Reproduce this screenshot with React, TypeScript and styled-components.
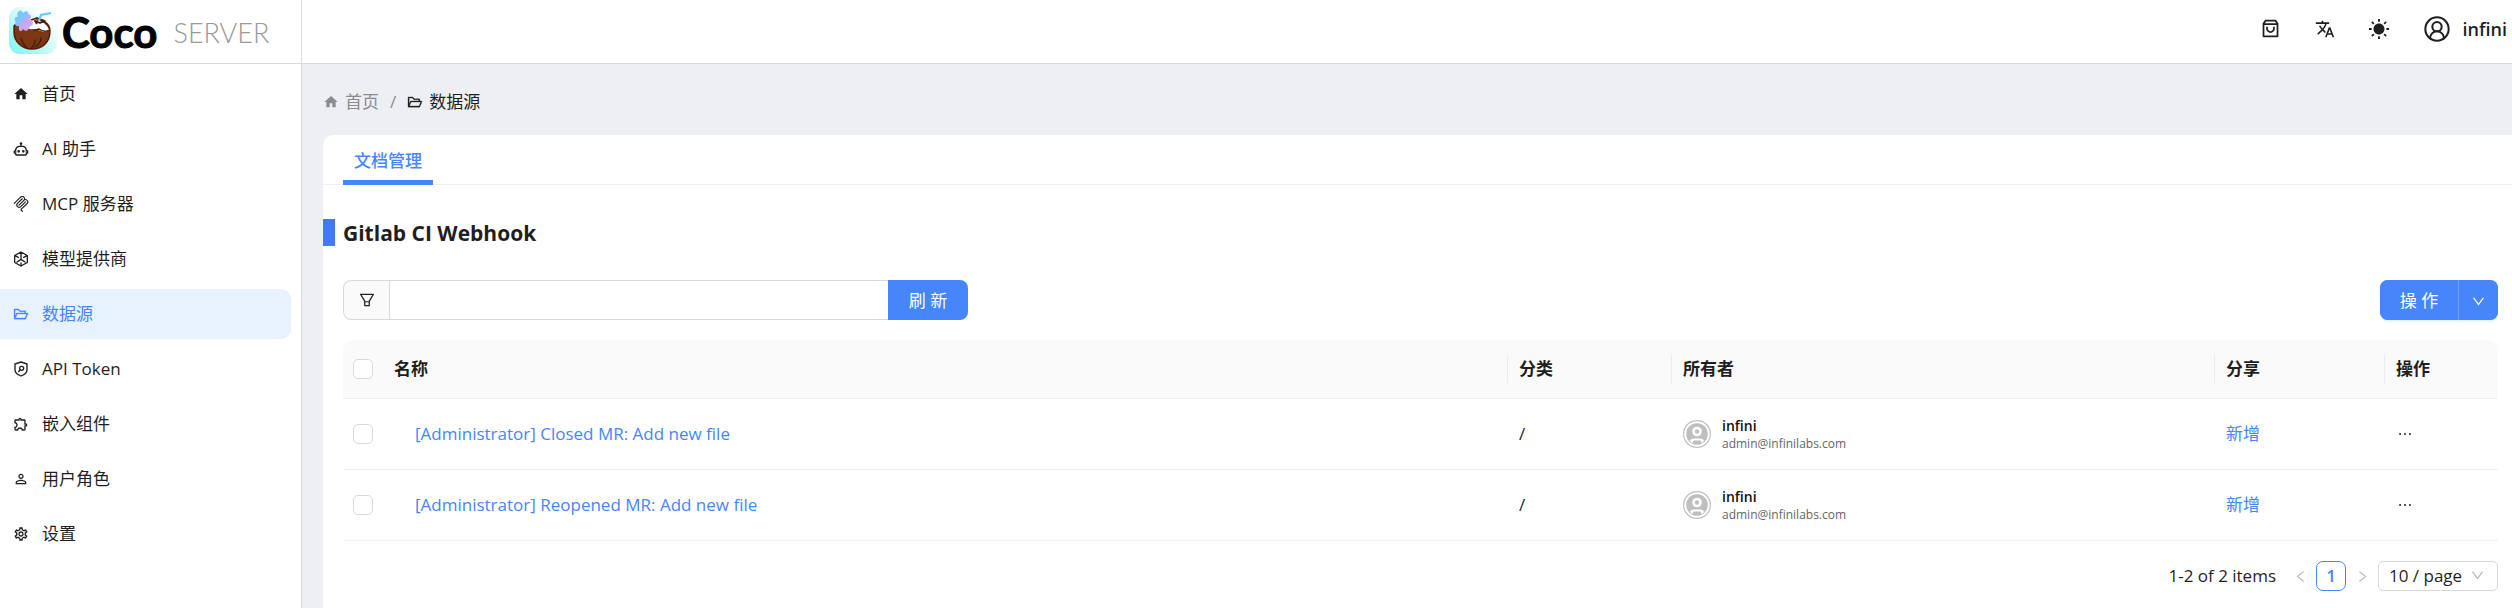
import React from 'react';
import styled, { createGlobalStyle } from 'styled-components';
import { MdHome, MdPersonOutline, MdTranslate, MdOutlineExtension, MdOutlineSettings } from 'react-icons/md';
import {
  AiOutlineFolderOpen,
  AiOutlineFilter,
  AiOutlineDown,
  AiOutlineLeft,
  AiOutlineRight,
  AiOutlineEllipsis,
} from 'react-icons/ai';
import { RiShoppingBag3Line, RiSunFill } from 'react-icons/ri';
import { CircleUserRound } from 'lucide-react';

const blue = '#4785fb';
const line = '#d9d9d9';
const ink = '#1f1f1f';

const GlobalStyle = createGlobalStyle`
  *, *::before, *::after { box-sizing: border-box; }
  body {
    margin: 0;
    color: ${ink};
    background: #eeeff3;
    font: 17px/24px 'Open Sans', 'Noto Sans CJK SC', sans-serif;
  }
  button, input, select { font: inherit; color: inherit; margin: 0; }
  a { color: inherit; text-decoration: none; }
  svg { display: block; flex: none; }
`;

const Shell = styled.div`
  display: grid;
  grid-template-columns: 302px minmax(0, 1fr);
  min-height: 100vh;
`;

const Sidebar = styled.aside`
  background: #fff;
  border-right: 1px solid ${line};
`;

const Brand = styled.a`
  display: flex;
  align-items: center;
  height: 64px;
  padding: 0 8px;
  border-bottom: 1px solid ${line};
  font-family: Lato, sans-serif;
  white-space: nowrap;
`;

const BrandName = styled.span`
  margin-left: 4px;
  font-size: 42px;
  font-weight: 700;
  line-height: 60px;
  color: #000;
  -webkit-text-stroke: 1px #000;
`;

const BrandKind = styled.span`
  margin: 3px 0 0 16px;
  font-size: 27px;
  font-weight: 300;
  color: #999;
`;

const Nav = styled.nav`
  display: flex;
  flex-direction: column;
  gap: 5px;
  padding: 5px 10px 5px 0;
`;

const NavLink = styled.a<{ $active?: boolean }>`
  display: flex;
  align-items: center;
  gap: 13px;
  height: 50px;
  padding-left: 13px;
  border-radius: 0 10px 10px 0;
  color: ${p => (p.$active ? blue : ink)};
  background: ${p => (p.$active ? '#e8f2fe' : 'transparent')};
`;

const Main = styled.div`
  display: flex;
  flex-direction: column;
`;

const TopBar = styled.header`
  display: flex;
  align-items: center;
  justify-content: flex-end;
  height: 64px;
  padding: 0 5px 6px 0;
  background: #fff;
  border-bottom: 1px solid ${line};
`;

const IconButton = styled.button`
  display: grid;
  place-items: center;
  width: 54px;
  height: 40px;
  padding: 0;
  border: 0;
  background: none;
  cursor: pointer;
`;

const UserButton = styled.button`
  display: flex;
  align-items: center;
  gap: 12px;
  height: 40px;
  margin-left: 17px;
  padding: 0;
  border: 0;
  background: none;
  font-size: 18px;
  font-weight: 600;
  cursor: pointer;
`;

const Crumbs = styled.nav`
  display: flex;
  align-items: center;
  height: 71px;
  padding: 5px 0 0 21px;
`;

const Crumb = styled.a<{ $current?: boolean }>`
  display: flex;
  align-items: center;
  gap: 6px;
  color: ${p => (p.$current ? ink : '#8b8c8f')};
`;

const Slash = styled.span`
  margin: 0 11px;
  color: #8b8c8f;
`;

const Card = styled.main`
  flex: 1;
  margin-left: 21px;
  background: #fff;
  border-top-left-radius: 10px;
`;

const Tabs = styled.div`
  display: flex;
  height: 50px;
  padding-left: 20px;
  border-bottom: 1px solid #f0f0f0;
`;

const Tab = styled.button`
  height: 50px;
  padding: 6px 11px 0;
  border: 0;
  border-bottom: 5px solid ${blue};
  background: none;
  color: ${blue};
  font-weight: 500;
`;

const Heading = styled.h1`
  display: flex;
  align-items: center;
  gap: 8px;
  margin: 34px 0;
  height: 27px;
  font-size: 21px;
  font-weight: 700;

  &::before {
    content: '';
    width: 12px;
    height: 27px;
    background: #4377fe;
  }
`;

const Body = styled.div`
  padding: 0 14px 16px 20px;
`;

const Toolbar = styled.div`
  display: flex;
  justify-content: space-between;
  margin-bottom: 20px;
`;

const Search = styled.form`
  display: flex;
  width: 625px;
  height: 40px;
`;

const FilterButton = styled.button`
  display: grid;
  place-items: center;
  width: 46px;
  padding: 0;
  border: 1px solid ${line};
  border-right: 0;
  border-radius: 8px 0 0 8px;
  background: #fafafa;
`;

const SearchInput = styled.input`
  flex: 1;
  min-width: 0;
  padding: 0 12px;
  border: 1px solid ${line};
  border-right: 0;
  outline: 0;
`;

const PrimaryButton = styled.button<{ $side: 'left' | 'right'; $width: number }>`
  display: grid;
  place-items: center;
  width: ${p => p.$width}px;
  height: 40px;
  padding: 2px 0 0;
  border: 0;
  border-radius: ${p => (p.$side === 'left' ? '8px 0 0 8px' : '0 8px 8px 0')};
  background: ${blue};
  color: #fff;
`;

const ButtonGroup = styled.div`
  display: flex;
  gap: 1px;
  border-radius: 8px;
  background: #68a4ff;
  box-shadow: 0 2px 1px #e8f3ff;
`;

const Table = styled.table`
  width: 100%;
  table-layout: fixed;
  border-collapse: separate;
  border-spacing: 0;
`;

const HeadCell = styled.th<{ $width?: number; $divided?: boolean }>`
  position: relative;
  width: ${p => (p.$width ? `${p.$width}px` : 'auto')};
  height: 59px;
  padding: 0 11px;
  border-bottom: 1px solid #f0f0f0;
  background: #fafafa;
  text-align: left;
  font-weight: 700;

  &:first-child { padding: 0 10px; border-top-left-radius: 10px; }
  &:last-child { border-top-right-radius: 10px; }

  &::before {
    content: '';
    position: absolute;
    left: -1px;
    top: 15px;
    width: ${p => (p.$divided ? 1 : 0)}px;
    height: 28px;
    background: #ececec;
  }
`;

const Cell = styled.td<{ $indent?: boolean }>`
  height: 71px;
  padding: 0 11px 0 ${p => (p.$indent ? 32 : 11)}px;
  border-bottom: 1px solid #f0f0f0;

  &:first-child { padding: 0 10px; }
`;

const Checkbox = styled.input`
  display: block;
  appearance: none;
  width: 20px;
  height: 20px;
  margin: 0;
  border: 1px solid ${line};
  border-radius: 5px;
  background: #fff;
`;

const TextLink = styled.a`
  color: ${blue};
`;

const Owner = styled.div`
  display: flex;
  align-items: center;
  gap: 11px;
`;

const OwnerName = styled.div`
  font-size: 14px;
  line-height: 18px;
  font-weight: 600;
  color: #111;
`;

const OwnerMail = styled.div`
  font-size: 12px;
  line-height: 17px;
  color: #666;
`;

const MoreButton = styled.button`
  display: block;
  padding: 0;
  border: 0;
  background: none;
`;

const Pager = styled.div`
  display: flex;
  align-items: center;
  justify-content: flex-end;
  height: 30px;
  margin-top: 20px;
`;

const PageStep = styled.button`
  display: grid;
  place-items: center;
  width: 32px;
  height: 30px;
  padding: 0;
  border: 0;
  background: none;
  color: #b8b8b8;
`;

const PageTotal = styled.span`
  margin-right: 8px;
`;

const PageNumber = styled.button`
  width: 30px;
  height: 30px;
  padding: 0;
  border: 1px solid ${blue};
  border-radius: 7px;
  background: #fff;
  color: ${blue};
  font-weight: 600;
`;

const SizePicker = styled.label`
  position: relative;

  svg {
    position: absolute;
    right: 13px;
    top: 7px;
    color: #b8b8b8;
    pointer-events: none;
  }
`;

const SizeSelect = styled.select`
  display: block;
  appearance: none;
  width: 120px;
  height: 30px;
  padding: 0 10px;
  border: 1px solid ${line};
  border-radius: 5px;
  background: #fff;
`;

const CocoLogo = () => (
  <svg width="50" height="50" viewBox="0 0 50 50" aria-hidden="true">
    <defs>
      <linearGradient id="tile" x1="0" y1="1" x2="1" y2="0">
        <stop offset="0" stopColor="#7df3ee" />
        <stop offset="0.45" stopColor="#c6faf7" />
        <stop offset="0.8" stopColor="#ffffff" />
        <stop offset="1" stopColor="#e4fdfc" />
      </linearGradient>
      <linearGradient id="flower" x1="0" y1="0" x2="1" y2="1">
        <stop offset="0.3" stopColor="#74c8fb" />
        <stop offset="0.65" stopColor="#d2a4f6" />
      </linearGradient>
    </defs>
    <rect x="1" y="0" width="48" height="47" rx="11" fill="url(#tile)" />
    <path d="M6 19c4-5 9-4 14-3l9-3c7 0 13 4 13 11 0 12-8 18-18 18S6 35 6 25Z" fill="#7e3713" stroke="#4b1d08" strokeWidth="1.4" />
    <path d="M17 17c4-5 9-4 14-3 5 1 9 5 10 9-4 2-5 3-8 1-3-1-4-2-6-1-4 1-7 0-10-2Z" fill="#fff" />
    <path d="M18 22c5 1 8 2 13 0 4 3 7 3 10 1" fill="none" stroke="#4b1d08" strokeWidth="1.4" />
    <path d="m23 13 6-2 8 3-5 2-5-2 2 3" fill="none" stroke="#4b1d08" strokeWidth="1.8" strokeLinejoin="round" />
    <path d="M13 31c1 4 3 7 6 10M27 33c0 3-1 6-4 8M33 31c0 4-3 7-6 9" fill="none" stroke="#4b1d08" strokeWidth="1.4" strokeLinecap="round" />
    <path d="m31 14 2-6 10-2" fill="none" stroke="#6cc9f5" strokeWidth="2.2" />
    <path d="M10 5c2-3 4-1 5 1 2-3 6-2 5 1 3 0 4 3 2 5 4 2 4 7 0 7-1 5-5 6-7 3-2 4-5 2-4-3-4 1-5-3-3-4-3-2-1-6 2-5-1-2-1-4 0-5Z" fill="url(#flower)" />
  </svg>
);

type GlyphProps = { children: React.ReactNode; filled?: boolean };
const Glyph = ({ children, filled }: GlyphProps) => (
  <svg
    width="16"
    height="16"
    viewBox="0 0 24 24"
    fill={filled ? 'currentColor' : 'none'}
    stroke={filled ? 'none' : 'currentColor'}
    strokeWidth="2"
    strokeLinejoin="round"
    strokeLinecap="round"
    aria-hidden="true"
  >
    {children}
  </svg>
);

const RobotIcon = () => (
  <Glyph filled>
    <path d="M17.5 15.5a2 2 0 1 1-4 0 2 2 0 0 1 4 0M8.5 13.5a2 2 0 1 0 0 4 2 2 0 0 0 0-4M23 15v3c0 .55-.45 1-1 1h-1v1c0 1.11-.89 2-2 2H5a2 2 0 0 1-2-2v-1H2c-.55 0-1-.45-1-1v-3c0-.55.45-1 1-1h1c0-3.87 3.13-7 7-7h1V5.73A2 2 0 0 1 12 2a2 2 0 0 1 1 3.730V7h1c3.87 0 7 3.13 7 7h1c.55 0 1 .45 1 1m-2 1h-2v-2c0-2.76-2.24-5-5-5h-4c-2.76 0-5 2.24-5 5v2H3v1h2v3h14v-3h2z" />
  </Glyph>
);

const McpIcon = () => (
  <Glyph filled>
    <path d="M15.688 2.343a2.588 2.588 0 00-3.61 0l-9.626 9.44a.863.863 0 01-1.203 0 .823.823 0 010-1.18l9.626-9.44a4.313 4.313 0 016.016 0 4.116 4.116 0 011.204 3.54 4.3 4.3 0 013.609 1.18l.05.05a4.115 4.115 0 010 5.9l-8.706 8.537a.274.274 0 000 .393l1.788 1.754a.823.823 0 010 1.18.863.863 0 01-1.203 0l-1.788-1.753a1.92 1.92 0 010-2.754l8.706-8.538a2.47 2.47 0 000-3.54l-.05-.049a2.588 2.588 0 00-3.607-.003l-7.172 7.034-.002.002-.098.097a.863.863 0 01-1.204 0 .823.823 0 010-1.18l7.273-7.133a2.47 2.47 0 00-.003-3.537z" />
    <path d="M14.485 4.703a.823.823 0 000-1.18.863.863 0 00-1.204 0l-7.119 6.982a4.115 4.115 0 000 5.9 4.314 4.314 0 006.016 0l7.12-6.982a.823.823 0 000-1.18.863.863 0 00-1.204 0l-7.119 6.982a2.588 2.588 0 01-3.61 0 2.47 2.47 0 010-3.54l7.12-6.982z" />
  </Glyph>
);

const ModelIcon = () => (
  <Glyph>
    <path d="m12 1.5 9.5 5.2v10.6L12 22.5l-9.5-5.2V6.7ZM12 2v6M12 12.5l-6 4M12 12.5l6 4M12 12.5V8M3 7l5 2.5M21 7l-5 2.5M12 22v-4" />
  </Glyph>
);

const TokenIcon = () => (
  <Glyph>
    <path d="M12 1.500 21 4.500v9c0 4-4 7-9 9-5-2-9-5-9-9v-9ZM10.500 13.500 8.500 16" />
    <circle cx="13" cy="11" r="3" />
  </Glyph>
);

const Avatar = () => (
  <svg width="28" height="28" viewBox="0 0 28 28" aria-hidden="true">
    <circle cx="14" cy="14" r="13.4" fill="#fff" stroke="#bfbfbf" strokeWidth="1.2" />
    <circle cx="14" cy="14" r="10.8" fill="#bfbfbf" />
    <circle cx="14" cy="11.5" r="3.5" fill="none" stroke="#fff" strokeWidth="2.6" />
    <path d="M7 20.500q1-2 4-2h6q3 0 4 2l-1.500 2.500h-11Z" fill="#fff" />
    <rect x="9.500" y="20.500" width="9" height="3" rx="1.500" fill="#bfbfbf" />
  </svg>
);

const navItems = [
  { label: '首页', icon: <MdHome size={16} /> },
  { label: 'AI 助手', icon: <RobotIcon /> },
  { label: 'MCP 服务器', icon: <McpIcon /> },
  { label: '模型提供商', icon: <ModelIcon /> },
  { label: '数据源', icon: <AiOutlineFolderOpen size={16} strokeWidth={20} />, active: true },
  { label: 'API Token', icon: <TokenIcon /> },
  { label: '嵌入组件', icon: <MdOutlineExtension size={16} /> },
  { label: '用户角色', icon: <MdPersonOutline size={16} /> },
  { label: '设置', icon: <MdOutlineSettings size={16} /> },
];

const documents = [
  '[Administrator] Closed MR: Add new file',
  '[Administrator] Reopened MR: Add new file',
];

export default function App() {
  return (
    <>
      <GlobalStyle />
      <Shell>
        <Sidebar>
          <Brand href="#">
            <CocoLogo />
            <BrandName>Coco</BrandName>
            <BrandKind>SERVER</BrandKind>
          </Brand>
          <Nav>
            {navItems.map(item => (
              <NavLink key={item.label} href="#" $active={item.active}>
                {item.icon}
                {item.label}
              </NavLink>
            ))}
          </Nav>
        </Sidebar>
        <Main>
          <TopBar>
            <IconButton aria-label="Store"><RiShoppingBag3Line size={21} /></IconButton>
            <IconButton aria-label="Language"><MdTranslate size={20} /></IconButton>
            <IconButton aria-label="Theme"><RiSunFill size={22} /></IconButton>
            <UserButton>
              <CircleUserRound size={28} strokeWidth={1.75} />
              infini
            </UserButton>
          </TopBar>
          <Crumbs aria-label="Breadcrumb">
            <Crumb href="#"><MdHome size={16} />首页</Crumb>
            <Slash>/</Slash>
            <Crumb href="#" $current><AiOutlineFolderOpen size={16} strokeWidth={20} />数据源</Crumb>
          </Crumbs>
          <Card>
            <Tabs role="tablist">
              <Tab role="tab" aria-selected="true">文档管理</Tab>
            </Tabs>
            <Heading>Gitlab CI Webhook</Heading>
            <Body>
              <Toolbar>
                <Search onSubmit={e => e.preventDefault()}>
                  <FilterButton type="button" aria-label="Filter"><AiOutlineFilter size={18} /></FilterButton>
                  <SearchInput aria-label="Search" />
                  <PrimaryButton $side="right" $width={80}>刷 新</PrimaryButton>
                </Search>
                <ButtonGroup>
                  <PrimaryButton $side="left" $width={78}>操 作</PrimaryButton>
                  <PrimaryButton $side="right" $width={39} aria-label="More actions"><AiOutlineDown size={15} /></PrimaryButton>
                </ButtonGroup>
              </Toolbar>
              <Table>
                <thead>
                  <tr>
                    <HeadCell $width={40}><Checkbox type="checkbox" aria-label="Select all" /></HeadCell>
                    <HeadCell>名称</HeadCell>
                    <HeadCell $width={164} $divided>分类</HeadCell>
                    <HeadCell $width={543} $divided>所有者</HeadCell>
                    <HeadCell $width={170} $divided>分享</HeadCell>
                    <HeadCell $width={113} $divided>操作</HeadCell>
                  </tr>
                </thead>
                <tbody>
                  {documents.map(title => (
                    <tr key={title}>
                      <Cell><Checkbox type="checkbox" aria-label={title} /></Cell>
                      <Cell $indent><TextLink href="#">{title}</TextLink></Cell>
                      <Cell>/</Cell>
                      <Cell>
                        <Owner>
                          <Avatar />
                          <div>
                            <OwnerName>infini</OwnerName>
                            <OwnerMail>admin@infinilabs.com</OwnerMail>
                          </div>
                        </Owner>
                      </Cell>
                      <Cell><TextLink href="#">新增</TextLink></Cell>
                      <Cell><MoreButton aria-label="More"><AiOutlineEllipsis size={18} /></MoreButton></Cell>
                    </tr>
                  ))}
                </tbody>
              </Table>
              <Pager>
                <PageTotal>1-2 of 2 items</PageTotal>
                <PageStep aria-label="Previous page"><AiOutlineLeft size={15} /></PageStep>
                <PageNumber>1</PageNumber>
                <PageStep aria-label="Next page"><AiOutlineRight size={15} /></PageStep>
                <SizePicker>
                  <SizeSelect aria-label="Page size">
                    <option>10 / page</option>
                  </SizeSelect>
                  <AiOutlineDown size={15} />
                </SizePicker>
              </Pager>
            </Body>
          </Card>
        </Main>
      </Shell>
    </>
  );
}
